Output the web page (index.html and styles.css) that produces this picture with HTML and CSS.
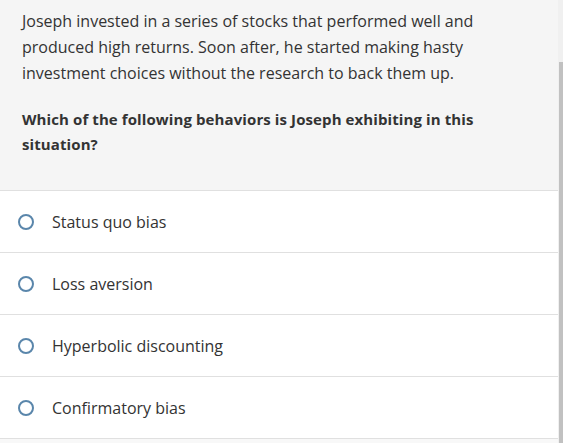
FILE: index.html
```html
<!DOCTYPE html>
<html>
<head>
<meta charset="utf-8">
<link rel="stylesheet" href="styles.css">
</head>
<body>
<div class="page">
  <main class="content">
    <section class="stem">
      <p class="prompt">Joseph invested in a series of stocks that performed well and produced high returns. Soon after, he started making hasty investment choices without the research to back them up.</p>
      <p class="question">Which of the following behaviors is Joseph exhibiting in this situation?</p>
    </section>
    <ul class="options">
      <li class="option"><span class="radio"></span><span class="label">Status quo bias</span></li>
      <li class="option"><span class="radio"></span><span class="label">Loss aversion</span></li>
      <li class="option"><span class="radio"></span><span class="label">Hyperbolic discounting</span></li>
      <li class="option"><span class="radio"></span><span class="label">Confirmatory bias</span></li>
    </ul>
    <div class="tail"></div>
  </main>
  <div class="scrollbar"><div class="thumb"></div></div>
</div>
</body>
</html>
```
FILE: styles.css
```css
html, body {
  margin: 0;
  padding: 0;
  height: 100%;
  overflow: hidden;
}
body {
  font-family: "Open Sans", "Liberation Sans", sans-serif;
  color: #333;
  background: #f5f5f5;
}
.page {
  display: flex;
  height: 443px;
}
.content {
  flex: 1;
  display: flex;
  flex-direction: column;
  background: #f5f5f5;
}
.stem {
  padding: 8px 46px 33px 22px;
  border-bottom: 1px solid #e0e0e0;
}
.prompt {
  margin: 0;
  font-size: 16px;
  line-height: 26px;
}
.question {
  margin: 21px 0 0;
  font-size: 15px;
  letter-spacing: 0.1px;
  font-weight: 700;
  line-height: 25px;
}
.options {
  list-style: none;
  margin: 0;
  padding: 0;
  background: #fff;
}
.option {
  height: 61px;
  display: flex;
  align-items: center;
  border-bottom: 1px solid #e0e0e0;
  padding-left: 18px;
  gap: 18px;
}
.radio {
  width: 12px;
  height: 12px;
  border: 2px solid #5a86ab;
  border-radius: 50%;
  flex: none;
}
.label {
  font-size: 16px;
}
.tail {
  flex: 1;
  background: #f8f8f8;
}
.scrollbar {
  width: 5px;
  background: #f0f0f0;
  display: flex;
  flex-direction: column;
  padding-top: 62px;
}
.thumb {
  flex: 1;
  background: #c1c1c1;
  margin-left: 1px;
}
```
